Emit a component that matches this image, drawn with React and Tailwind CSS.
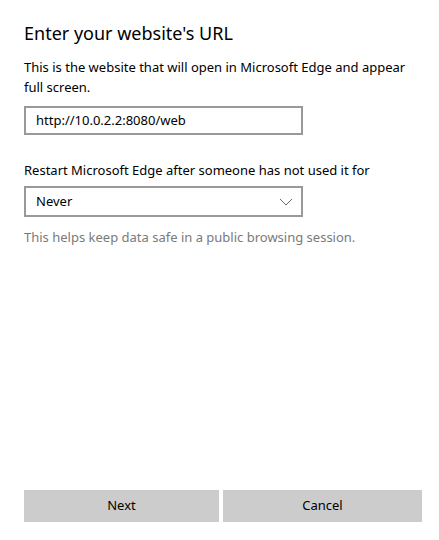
import React from 'react';

export default function App() {
  return (
    <div
      className="h-[540px] w-[439px] bg-white flex flex-col text-[#1a1a1a]"
      style={{ fontFamily: '"Noto Sans", "Open Sans", sans-serif' }}
    >
      <div className="flex-1 pl-6 pr-4 pt-[19px]">
        <h1 className="text-[18px] leading-[28px] font-normal text-black">Enter your website's URL</h1>

        <p className="mt-[10px] text-[13px] leading-[20px] text-black">
          This is the website that will open in Microsoft Edge and appear full screen.
        </p>

        <div className="mt-[9px] w-[279px] h-[29px] border-2 border-[#999999] flex items-center px-[10px] text-[13px] text-black">
          http://10.0.2.2:8080/web
        </div>

        <div className="mt-[25px] text-[13px] leading-[20px] text-black">
          Restart Microsoft Edge after someone has not used it for
        </div>

        <div className="mt-[6px] w-[279px] h-[31px] border-2 border-[#999999] flex items-center justify-between pl-[10px] pr-[8px] text-[13px] text-black">
          <span>Never</span>
          <svg width="14" height="8" viewBox="0 0 14 8" fill="none">
            <path d="M1 1 L7 7 L13 1" stroke="#6b6b6b" strokeWidth="1" />
          </svg>
        </div>

        <p className="mt-[10px] text-[13px] leading-[20px] text-[#7a7a7a]">
          This helps keep data safe in a public browsing session.
        </p>
      </div>

      <div className="flex gap-[4px] pl-6 pr-[17px] pb-[18px]">
        <button className="w-[195px] h-[32px] bg-[#cccccc] text-[13px] text-black">Next</button>
        <button className="flex-1 h-[32px] bg-[#cccccc] text-[13px] text-black">Cancel</button>
      </div>
    </div>
  );
}
